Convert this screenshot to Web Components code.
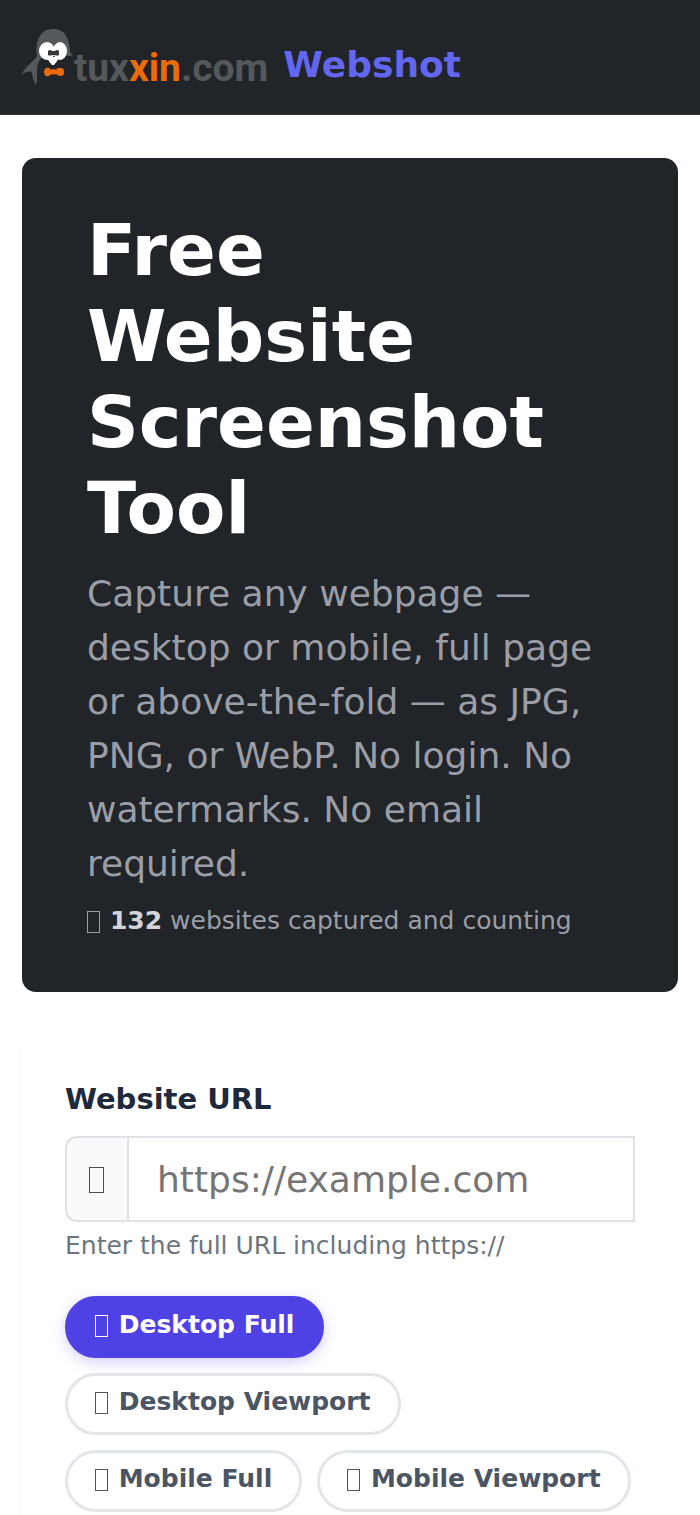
<!DOCTYPE html>
<html lang="en">
<head>
<meta charset="utf-8">
<meta name="viewport" content="width=device-width, initial-scale=1">
<title>Free Website Screenshot Tool</title>
<style>
  body {
    margin: 0;
    background: #fff;
    color: #212529;
    font-family: "DejaVu Sans", sans-serif;
    font-size: 25px;
    line-height: 38px;
  }
  main {
    display: flex;
    flex-direction: column;
    gap: 44px;
    padding: 43px 22px 0;
  }
</style>
</head>
<body>
<site-header>Webshot</site-header>
<main>
  <hero-banner count="132">
    <span slot="title">Free Website Screenshot Tool</span>
    Capture any webpage — desktop or mobile, full page or above-the-fold — as JPG, PNG, or WebP. No login. No watermarks. No email required.
  </hero-banner>
  <capture-form>
    <mode-pill active>Desktop Full</mode-pill>
    <mode-pill>Desktop Viewport</mode-pill>
    <mode-pill>Mobile Full</mode-pill>
    <mode-pill>Mobile Viewport</mode-pill>
  </capture-form>
</main>

<script>
// custom element BoxIcon, a thin upright box in the text colour
class BoxIcon extends HTMLElement {
  constructor() {
    super();
    this.attachShadow({ mode: "open" });
    this.shadowRoot.innerHTML = `
      <style>
        :host {
          display: inline-block;
          width: 13px;
          height: 22px;
          margin-right: 2px;
          box-sizing: border-box;
          border: 1px solid currentColor;
          vertical-align: -4px;
        }
        :host([large]) {
          width: 15px;
          height: 26px;
          margin-right: 1px;
        }
      </style>
    `;
  }
}

// custom element SiteHeader
class SiteHeader extends HTMLElement {
  constructor() {
    super();
    this.attachShadow({ mode: "open" });
    this.shadowRoot.innerHTML = `
      <style>
        :host {
          display: block;
          background: #212529;
          border-bottom: 1px solid #3a3338;
        }
        header {
          padding: 28px 22px;
        }
        a {
          display: flex;
          align-items: flex-end;
          width: fit-content;
          color: #6366f1;
          font-size: 36px;
          font-weight: bold;
          line-height: 42px;
          text-decoration: none;
          white-space: nowrap;
        }
        svg {
          display: block;
          width: 52px;
          height: 58px;
        }
        .logo {
          margin-right: 15px;
          color: #55585a;
          font-family: Roboto, sans-serif;
          font-size: 39px;
          line-height: 36px;
        }
        .accent {
          color: #e96b0c;
        }
      </style>
      <header>
        <a href="#">
          <svg viewBox="0 0 52 58" aria-hidden="true">
            <path fill="#55585a" d="M15 28C13 13 18 1 31 1s16 10 17 21c0 3 1 4 3 5-2 1-4 1-6 1-8-4-19-4-25 1-4 4-5 10-5 16 0 5 0 8-1 12-2-4-4-8-4-13-3-1-6 0-10 2 2-6 10-11 15-18z"/>
            <ellipse fill="#fff" cx="25" cy="23" rx="8" ry="9"/>
            <ellipse fill="#fff" cx="38" cy="23" rx="7" ry="9"/>
            <path fill="#fff" d="M26 29h10c1 3-2 5-4 8h-2c-2-3-5-5-4-8z"/>
            <path fill="#33373a" d="M26 23q2-2 4 0h3q2-2 4 0v4q-2 1-4 0h-3q-2 1-4 0z"/>
            <path fill="#e96b0c" d="M24 40q4-1 5 2 3-2 5 0 1-3 5-2 3 0 3 4t-3 4q-3 0-5-2-2 1-5 0-1 3-5 2-2-1-2-4t2-4z"/>
          </svg>
          <span class="logo">tux<span class="accent">xin</span>.com</span>
          <slot></slot>
        </a>
      </header>
    `;
  }
}

// custom element HeroBanner
class HeroBanner extends HTMLElement {
  constructor() {
    super();
    this.attachShadow({ mode: "open" });
    this.shadowRoot.innerHTML = `
      <style>
        :host {
          display: block;
          background: #212529;
          border-radius: 14px;
          padding: 49px 65px 52px;
        }
        h1 {
          margin: 0 0 16px;
          color: #fff;
          font-size: 72px;
          line-height: 86px;
        }
        p {
          margin: 0;
          color: #9b9ea6;
        }
        .lead {
          margin-bottom: 11px;
          font-size: 36px;
          line-height: 54px;
        }
        strong {
          color: #d3d5d9;
        }
      </style>
      <h1><slot name="title"></slot></h1>
      <p class="lead"><slot></slot></p>
      <p><box-icon></box-icon> <strong></strong> websites captured and counting</p>
    `;
  }

  connectedCallback() {
    this.shadowRoot.querySelector("strong").textContent = this.getAttribute("count");
  }
}

// custom element CaptureForm
class CaptureForm extends HTMLElement {
  constructor() {
    super();
    this.attachShadow({ mode: "open" });
    this.shadowRoot.innerHTML = `
      <style>
        :host {
          display: block;
          border-radius: 14px;
          padding: 41px 43px 22px;
          box-shadow: 0 4px 14px rgba(0, 0, 0, 0.02);
        }
        form {
          margin: 0;
        }
        label {
          display: block;
          margin-bottom: 15px;
          color: #1e293b;
          font-size: 29px;
          font-weight: bold;
          line-height: 44px;
        }
        .group {
          display: flex;
        }
        .addon {
          display: flex;
          align-items: center;
          padding: 2px 22px 0;
          border: 2px solid #dee2e6;
          border-right: 0;
          border-radius: 12px 0 0 12px;
          background: #f8fafc;
          color: #495057;
        }
        input {
          flex: 1;
          min-width: 0;
          box-sizing: border-box;
          height: 86px;
          padding: 0 28px;
          border: 2px solid #dee2e6;
          border-radius: 0;
          background: #fff;
          color: #212529;
          font: inherit;
          font-size: 36px;
        }
        input::placeholder {
          color: #757575;
          opacity: 1;
        }
        .hint {
          margin: 5px 0 31px;
          color: #6c757d;
        }
        .modes {
          display: flex;
          flex-wrap: wrap;
          gap: 15px;
        }
      </style>
      <form>
        <label for="url">Website URL</label>
        <div class="group">
          <span class="addon"><box-icon large></box-icon></span>
          <input id="url" type="url" placeholder="https://example.com" aria-describedby="hint">
        </div>
        <p class="hint" id="hint">Enter the full URL including https://</p>
        <div class="modes"><slot></slot></div>
      </form>
    `;
  }
}

// custom element ModePill
class ModePill extends HTMLElement {
  constructor() {
    super();
    this.attachShadow({ mode: "open" });
    this.shadowRoot.innerHTML = `
      <style>
        :host {
          display: block;
        }
        button {
          display: block;
          padding: 9px 27px 13px;
          border: 3px solid #e2e5e9;
          border-radius: 31px;
          background: #fff;
          color: #4b5563;
          font: inherit;
          font-weight: bold;
          line-height: 34px;
          white-space: nowrap;
          cursor: pointer;
        }
        :host([active]) button {
          border-color: #4f42e5;
          background: #4f42e5;
          color: #fff;
          box-shadow: 0 4px 14px rgba(79, 66, 229, 0.25);
        }
      </style>
      <button type="button"><box-icon></box-icon> <slot></slot></button>
    `;
  }

  connectedCallback() {
    this.shadowRoot.querySelector("button").setAttribute("aria-pressed", this.hasAttribute("active"));
  }
}

customElements.define("box-icon", BoxIcon);
customElements.define("site-header", SiteHeader);
customElements.define("hero-banner", HeroBanner);
customElements.define("capture-form", CaptureForm);
customElements.define("mode-pill", ModePill);
</script>
</body>
</html>
